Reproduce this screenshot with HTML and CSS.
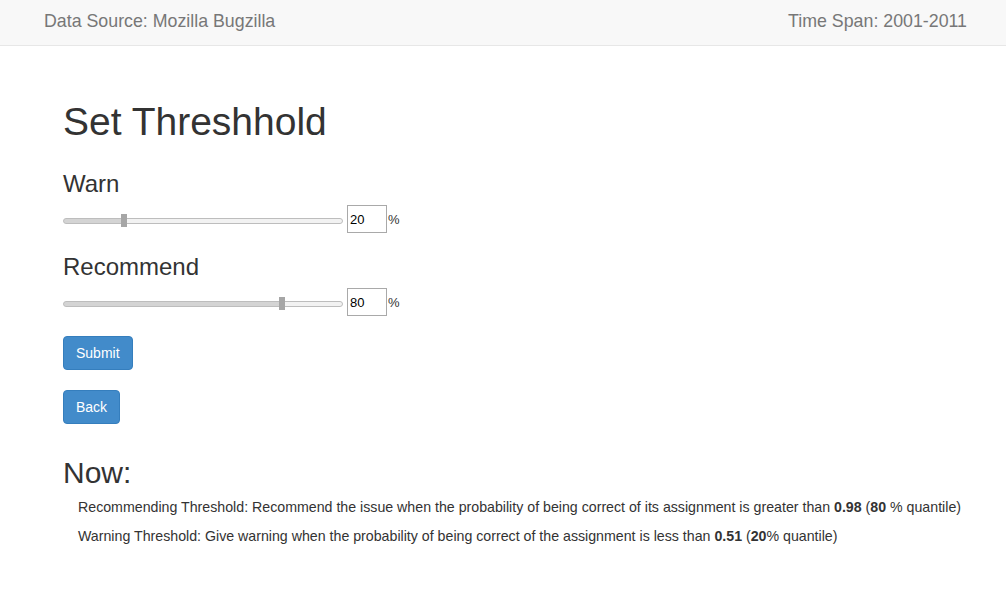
FILE: index.html
```html
<!DOCTYPE html>
<html>
<head>
<meta charset="utf-8">
<link rel="stylesheet" href="styles.css">
</head>
<body>
<nav class="navbar">
  <span class="brand">Data Source: Mozilla Bugzilla</span>
  <span class="brand">Time Span: 2001-2011</span>
</nav>
<main class="container">
  <h1 class="title">Set Threshhold</h1>
  <h3 class="label">Warn</h3>
  <div class="slider-row">
    <input type="range" class="range" min="0" max="100" value="20" style="--p:22%">
    <input type="text" class="num" value="20">
    <span class="pct">%</span>
  </div>
  <h3 class="label">Recommend</h3>
  <div class="slider-row">
    <input type="range" class="range" min="0" max="100" value="80" style="--p:78%">
    <input type="text" class="num" value="80">
    <span class="pct">%</span>
  </div>
  <div class="buttons">
    <button class="btn">Submit</button>
    <button class="btn">Back</button>
  </div>
  <h2 class="now">Now:</h2>
  <div class="status">
    <p>Recommending Threshold: Recommend the issue when the probability of being correct of its assignment is greater than <b>0.98</b> (<b>80</b> % quantile)</p>
    <p>Warning Threshold: Give warning when the probability of being correct of the assignment is less than <b>0.51</b> (<b>20</b>% quantile)</p>
  </div>
</main>
</body>
</html>
```
FILE: styles.css
```css
* { box-sizing: border-box; }
html, body { margin: 0; padding: 0; background: #fff; }
body {
  font-family: "Liberation Sans", Arial, sans-serif;
  font-size: 14px;
  color: #333;
}
.navbar {
  height: 46px;
  background: #f8f8f8;
  border-bottom: 1px solid #e7e7e7;
  display: flex;
  justify-content: space-between;
  align-items: center;
  padding: 0 39px 0 44px;
}
.brand {
  font-size: 17.8px;
  color: #777;
  line-height: 20px;
  padding-bottom: 4px;
}
.container {
  padding: 0 20px 0 63px;
}
.title {
  font-size: 39px;
  font-weight: 400;
  margin: 54px 0 0;
  padding-bottom: 6px;
  line-height: 44px;
}
.label {
  font-size: 24px;
  font-weight: 400;
  margin: 21px 0 0;
  line-height: 26px;
}
.slider-row {
  display: flex;
  align-items: center;
  margin-top: 8px;
  height: 28px;
}
.range {
  -webkit-appearance: none;
  appearance: none;
  width: 280px;
  height: 14px;
  margin: 3px 4px 0 0;
  background: transparent;
}
.range::-webkit-slider-runnable-track {
  height: 6px;
  border: 1px solid #bdbdbd;
  border-radius: 3px;
  background: linear-gradient(to right, #d4d4d4 var(--p), #f2f2f2 var(--p));
}
.range::-webkit-slider-thumb {
  -webkit-appearance: none;
  width: 16px;
  height: 13px;
  margin-top: -4.5px;
  border-radius: 3px;
  border-left: 5px solid transparent;
  border-right: 5px solid transparent;
  background: #a6a6a6;
  background-clip: padding-box;
}
.num {
  width: 40px;
  height: 28px;
  border: 1px solid #a9a9a9;
  padding: 0 2px;
  font-family: "Liberation Sans", Arial, sans-serif;
  font-size: 13px;
  color: #000;
  margin: 0;
}
.pct {
  font-size: 13px;
  color: #333;
  margin-left: 1px;
}
.buttons {
  display: flex;
  flex-direction: column;
  align-items: flex-start;
  gap: 20px;
  margin-top: 20px;
}
.btn {
  font-family: "Liberation Sans", Arial, sans-serif;
  font-size: 14px;
  line-height: 20px;
  padding: 6px 12px;
  color: #fff;
  background: #428bca;
  border: 1px solid #357ebd;
  border-radius: 4px;
}
.now {
  font-size: 30px;
  font-weight: 400;
  margin: 32px 0 0;
  line-height: 33px;
}
.status {
  padding-left: 15px;
  margin-top: 4px;
}
.status p {
  margin: 0;
  font-size: 14.2px;
  line-height: 29px;
  white-space: nowrap;
}
```
